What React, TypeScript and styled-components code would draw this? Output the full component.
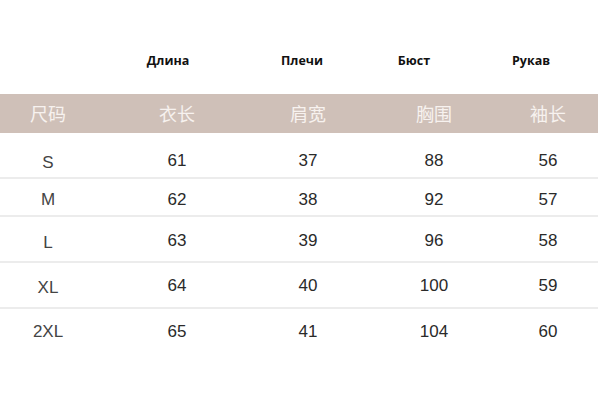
import React from "react";
import styled, { createGlobalStyle } from "styled-components";

const Global = createGlobalStyle`
  html, body { margin: 0; padding: 0; background: #ffffff; }
  body { width: 600px; height: 418px; overflow: hidden; }
`;

const Page = styled.div`
  width: 598px;
  display: flex;
  flex-direction: column;
`;

const LabelRow = styled.div`
  height: 94px;
  display: grid;
  grid-template-columns: 96px 144px 124px 100px 134px;
  align-items: center;
`;

const Label = styled.div`
  text-align: center;
  font-family: "Open Sans", "DejaVu Sans", sans-serif;
  font-weight: 700;
  font-size: 12.5px;
  color: #111;
  transform: translateY(13px);
`;

const cols = "96px 162px 100px 152px 76px";

const HeadBand = styled.div`
  height: 39px;
  background: #cfc0b8;
  display: grid;
  grid-template-columns: ${cols};
  align-items: center;
`;

const HeadCell = styled.div`
  text-align: center;
  font-family: "Noto Sans CJK SC", "Noto Sans", sans-serif;
  font-weight: 400;
  font-size: 18px;
  color: #f7f2ef;
  line-height: 1;
  transform: translateY(-1px);
`;

const Row = styled.div<{ $h: number; $line: boolean }>`
  height: ${(p) => p.$h}px;
  display: grid;
  grid-template-columns: ${cols};
  align-items: center;
  border-bottom: ${(p) => (p.$line ? "2px solid #ececec" : "none")};
  box-sizing: border-box;
`;

const Cell = styled.div<{ $size?: boolean; $dy?: number }>`
  text-align: center;
  font-family: "Liberation Sans", Arial, sans-serif;
  font-size: 17px;
  color: ${(p) => (p.$size ? "#444" : "#2a2a2a")};
  transform: translateY(${(p) => p.$dy ?? 0}px);
`;

const rows = [
  { s: "S", v: ["61", "37", "88", "56"], h: 46, dy: 6, sdy: 8 },
  { s: "M", v: ["62", "38", "92", "57"], h: 38, dy: 2.5, sdy: 3 },
  { s: "L", v: ["63", "39", "96", "58"], h: 46, dy: 1.5, sdy: 4 },
  { s: "XL", v: ["64", "40", "100", "59"], h: 46, dy: 1, sdy: 3 },
  { s: "2XL", v: ["65", "41", "104", "60"], h: 46, dy: -0.5, sdy: 0 },
];

export default function App() {
  return (
    <>
      <Global />
      <Page>
        <LabelRow>
          <span />
          <Label>Длина</Label>
          <Label>Плечи</Label>
          <Label>Бюст</Label>
          <Label>Рукав</Label>
        </LabelRow>
        <HeadBand>
          <HeadCell>尺码</HeadCell>
          <HeadCell>衣长</HeadCell>
          <HeadCell>肩宽</HeadCell>
          <HeadCell>胸围</HeadCell>
          <HeadCell>袖长</HeadCell>
        </HeadBand>
        {rows.map((r, i) => (
          <Row key={r.s} $h={r.h} $line={i < rows.length - 1}>
            <Cell $size $dy={r.sdy}>{r.s}</Cell>
            {r.v.map((v, j) => (
              <Cell key={j} $dy={r.dy}>{v}</Cell>
            ))}
          </Row>
        ))}
      </Page>
    </>
  );
}
